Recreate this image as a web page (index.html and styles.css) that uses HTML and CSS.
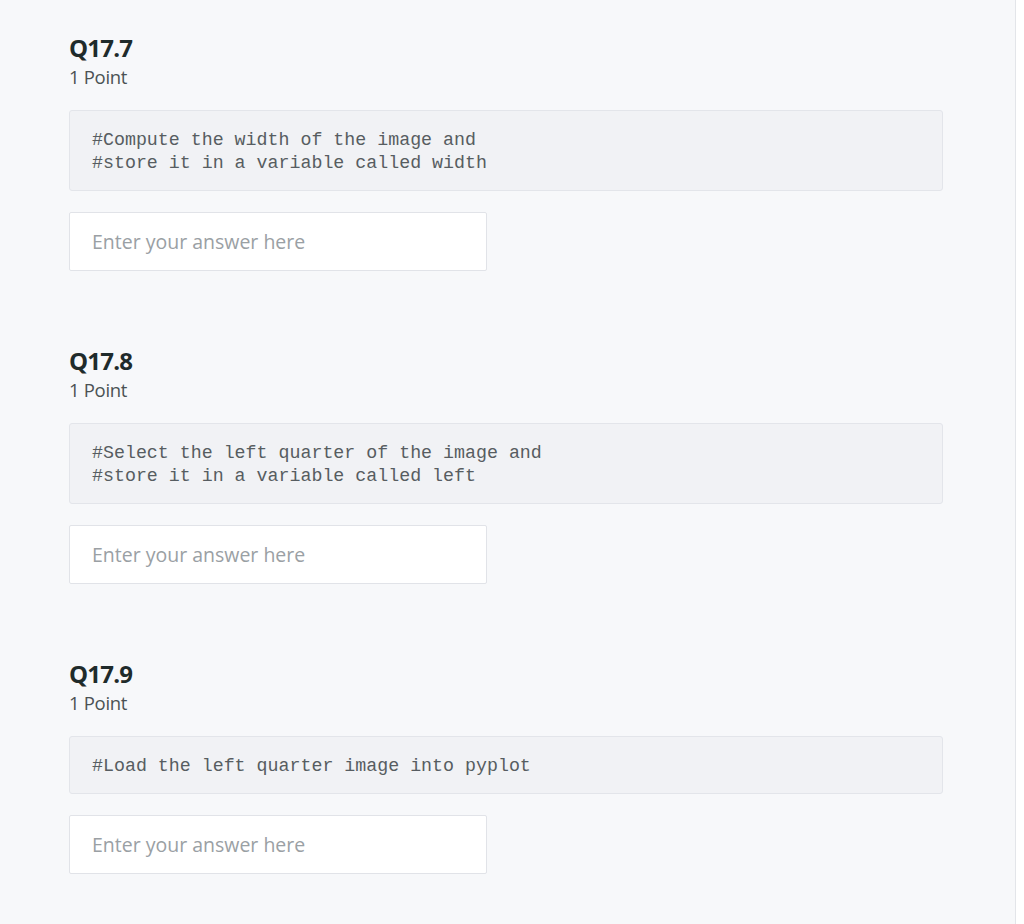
FILE: index.html
```html
<!DOCTYPE html>
<html>
<head>
<meta charset="utf-8">
<link rel="stylesheet" href="styles.css">
</head>
<body>
<div class="page">
  <main class="main">
    <section class="question">
      <h2 class="q-title">Q17.7</h2>
      <div class="q-points">1 Point</div>
      <pre class="code">#Compute the width of the image and
#store it in a variable called width</pre>
      <input class="answer" type="text" placeholder="Enter your answer here">
    </section>
    <section class="question">
      <h2 class="q-title">Q17.8</h2>
      <div class="q-points">1 Point</div>
      <pre class="code">#Select the left quarter of the image and
#store it in a variable called left</pre>
      <input class="answer" type="text" placeholder="Enter your answer here">
    </section>
    <section class="question">
      <h2 class="q-title">Q17.9</h2>
      <div class="q-points">1 Point</div>
      <pre class="code">#Load the left quarter image into pyplot</pre>
      <input class="answer" type="text" placeholder="Enter your answer here">
    </section>
  </main>
  <div class="side"></div>
</div>
</body>
</html>
```

FILE: styles.css
```css
html, body {
  margin: 0;
  padding: 0;
  height: 100%;
}
body {
  background: #ffffff;
  font-family: "Open Sans", "Lato", sans-serif;
}
.page {
  display: flex;
  height: 924px;
  overflow: hidden;
}
.main {
  width: 1016px;
  flex: none;
  background: #f7f8fa;
  border-right: 1px solid #e3e5e9;
  padding: 33px 0 0 69px;
  box-sizing: border-box;
}
.side {
  flex: 1;
  background: #ffffff;
}
.question {
  width: 874px;
  margin-bottom: 75px;
}
.q-title {
  margin: 0;
  font-family: "Open Sans", sans-serif;
  font-size: 24px;
  line-height: 30px;
  font-weight: 700;
  color: #1f2b2b;
  letter-spacing: -0.8px;
}
.q-points {
  font-size: 18.5px;
  line-height: 22px;
  color: #4b5254;
  margin-top: 3px;
  letter-spacing: -0.3px;
}
.code {
  margin: 22px 0 0 0;
  background: #f1f2f5;
  border: 1px solid #e3e5ea;
  border-radius: 3px;
  padding: 18px 22px 15px 22px;
  font-family: "Liberation Mono", "Courier New", monospace;
  font-size: 18.3px;
  line-height: 23px;
  color: #575d61;
  white-space: pre;
}
.answer {
  display: block;
  margin-top: 21px;
  width: 418px;
  height: 59px;
  box-sizing: border-box;
  border: 1px solid #e1e3e8;
  border-radius: 2px;
  background: #ffffff;
  padding: 0 22px;
  font-family: "Open Sans", sans-serif;
  font-size: 19.5px;
  color: #333;
  outline: none;
  letter-spacing: 0;
}
.answer::placeholder {
  color: #9aa0a4;
}
```
